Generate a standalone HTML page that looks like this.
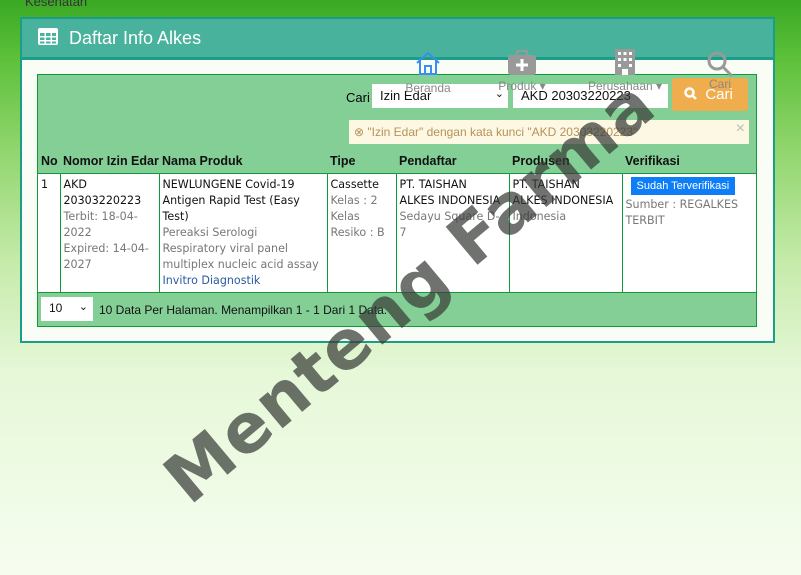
<!DOCTYPE html>
<html><head><meta charset="utf-8"><style>
*{box-sizing:border-box;margin:0;padding:0}
body{width:801px;height:575px;overflow:hidden;position:relative;font-family:"Liberation Sans",sans-serif;
background:linear-gradient(180deg,#3aa824 0%,#5cc03a 10%,#8ed46a 25%,#c4eaa8 45%,#e6f8d8 65%,#f6fdf0 100%);}
.kes{position:absolute;left:25px;top:-6px;font-size:13px;color:#333}
.panel{position:absolute;left:20px;top:17px;width:755px;height:326px;border:2px solid #1a9e8a;background:#fafdf5}
.ph{height:41px;background:#48b29c;border-bottom:3px solid #1a9e8a;color:#fff;font-size:18px;padding:9px 0 0 47px;position:relative}
.ph svg{position:absolute;left:16px;top:9px}
.box{position:absolute;left:15px;top:55px;width:720px;height:253px;background:#84cf95;border:1px solid #119a3a}
.nav{position:absolute;font-size:12px;color:#888;text-align:center}
.sel{position:absolute;background:#fff;font-size:13px;color:#111;height:24px;padding:4px 8px}
table{position:absolute;left:0;top:75px;width:718px;border-collapse:collapse;font-size:12px;table-layout:fixed}
th{font-weight:bold;text-align:left;font-size:12.5px;padding:0 3px;height:23px;border-bottom:1px solid #119a3a;color:#111;white-space:nowrap;overflow:hidden}
td{background:#fff;vertical-align:top;padding:3px 3px;border:1px solid #119a3a;font-family:"DejaVu Sans",sans-serif;font-size:11.1px;line-height:16px;color:#111;height:119px}
td:first-child{border-left:none}td:last-child{border-right:none}
.g{color:#777}.b{color:#2a5aa0}
.wm{position:absolute;left:410px;top:292px;font-family:"DejaVu Sans",sans-serif;font-weight:bold;font-size:68px;color:rgba(55,60,55,.72);transform:translate(-50%,-50%) rotate(-40deg);white-space:nowrap;letter-spacing:1px}
</style></head><body>
<div class="kes">Kesehatan</div>
<div class="panel">
 <div class="ph"><svg width="20" height="17" viewBox="0 0 20 17"><rect x="0" y="0" width="20" height="17" rx="2" fill="#fff"/><g fill="#48b29c"><rect x="2" y="5" width="4.5" height="3"/><rect x="8" y="5" width="4.5" height="3"/><rect x="14" y="5" width="4" height="3"/><rect x="2" y="9.5" width="4.5" height="2.5"/><rect x="8" y="9.5" width="4.5" height="2.5"/><rect x="14" y="9.5" width="4" height="2.5"/><rect x="2" y="13.5" width="4.5" height="2"/><rect x="8" y="13.5" width="4.5" height="2"/><rect x="14" y="13.5" width="4" height="2"/></g></svg>Daftar Info Alkes</div>
 <div class="box">
  <div style="position:absolute;left:308px;top:15px;font-size:13px">Cari</div>
  <div class="sel" style="left:334px;top:9px;width:136px">Izin Edar<span style="position:absolute;right:4px;top:3px;font-size:11px">&#8964;</span></div>
  <div class="sel" style="left:475px;top:9px;width:155px">AKD 20303220223</div>
  <div style="position:absolute;left:634px;top:3px;width:76px;height:33px;background:#f0ad4e;border-radius:3px;color:#fff;font-size:15px;padding:8px 0 0 12px"><svg width="13" height="13" viewBox="0 0 13 13" style="vertical-align:-1px" fill="none" stroke="#fff" stroke-width="2.5"><circle cx="5.5" cy="5.5" r="4"/><path d="M8.5 8.5 L12 12"/></svg>&nbsp; Cari</div>
  <div style="position:absolute;left:311px;top:45px;width:400px;height:24px;background:#fcf8e3;color:#b8925a;font-size:12px;padding:5px 5px">&#8855; "Izin Edar" dengan kata kunci "AKD 20303220223"<span style="position:absolute;right:4px;top:0;color:#bbb;font-size:16px">&#215;</span></div>
  <table>
   <colgroup><col style="width:22px"><col style="width:99px"><col style="width:168px"><col style="width:69px"><col style="width:113px"><col style="width:113px"><col></colgroup>
   <tr><th>No</th><th>Nomor Izin Edar</th><th>Nama Produk</th><th>Tipe</th><th>Pendaftar</th><th>Produsen</th><th>Verifikasi</th></tr>
   <tr><td>1</td><td>AKD 20303220223<br><span class="g">Terbit: 18-04-2022<br>Expired: 14-04-2027</span></td>
   <td>NEWLUNGENE Covid-19 Antigen Rapid Test (Easy Test)<br><span class="g">Pereaksi Serologi<br>Respiratory viral panel multiplex nucleic acid assay</span><br><span class="b">Invitro Diagnostik</span></td>
   <td>Cassette<br><span class="g">Kelas : 2<br>Kelas Resiko : B</span></td>
   <td>PT. TAISHAN<br>ALKES INDONESIA<br><span class="g">Sedayu Square D-7</span></td>
   <td>PT. TAISHAN<br>ALKES INDONESIA<br><span class="g">Indonesia</span></td>
   <td><span style="display:inline-block;background:#0d7ef7;color:#fff;font-family:'Liberation Sans',sans-serif;font-size:11px;padding:1px 6px;margin:0 0 2px 5px">Sudah Terverifikasi</span><br><span class="g">Sumber : REGALKES TERBIT</span></td></tr>
  </table>
  <div class="sel" style="left:3px;top:222px;width:52px;height:24px;font-size:12px">10<span style="position:absolute;right:5px;top:3px;font-size:11px">&#8964;</span></div>
  <div style="position:absolute;left:61px;top:228px;font-size:12px;color:#111">10 Data Per Halaman. Menampilkan 1 - 1 Dari 1 Data.</div>
 </div>
</div>
<div class="nav" style="left:398px;top:50px;width:60px"><svg width="26" height="26" viewBox="0 0 26 26" fill="none" stroke="#3a8ef0" stroke-width="2"><path d="M2 13 L13 3 L24 13 M5 11 V24 H21 V11 M10 24 V16 H16 V24"/></svg><div style="margin-top:2px">Beranda</div></div>
<div class="nav" style="left:492px;top:50px;width:60px"><svg width="30" height="26" viewBox="0 0 30 26"><rect x="1" y="5" width="28" height="20" rx="3" fill="#999"/><rect x="10" y="1" width="10" height="5" fill="none" stroke="#999" stroke-width="2"/><path d="M15 9 V21 M9 15 H21" stroke="#fff" stroke-width="3"/></svg><div>Produk &#9662;</div></div>
<div class="nav" style="left:585px;top:48px;width:80px"><svg width="22" height="28" viewBox="0 0 22 28"><rect x="1" y="1" width="20" height="26" fill="#999"/><g fill="#fff"><rect x="4" y="4" width="3" height="3"/><rect x="9.5" y="4" width="3" height="3"/><rect x="15" y="4" width="3" height="3"/><rect x="4" y="10" width="3" height="3"/><rect x="9.5" y="10" width="3" height="3"/><rect x="15" y="10" width="3" height="3"/><rect x="4" y="16" width="3" height="3"/><rect x="15" y="16" width="3" height="3"/><rect x="8" y="21" width="6" height="6"/></g></svg><div>Perusahaan &#9662;</div></div>
<div class="nav" style="left:700px;top:50px;width:40px"><svg width="28" height="28" viewBox="0 0 28 28" fill="none" stroke="#999" stroke-width="3"><circle cx="11" cy="11" r="8"/><path d="M17 17 L26 26"/></svg><div style="margin-top:-4px">Cari</div></div>
<div class="wm">Menteng Farma</div>
</body></html>
